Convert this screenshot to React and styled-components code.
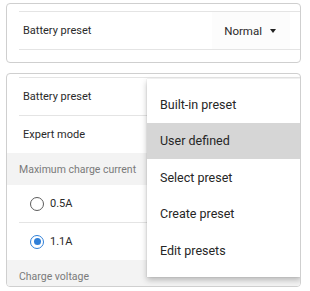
import styled, { createGlobalStyle } from 'styled-components'

const GlobalStyle = createGlobalStyle`
  body {
    margin: 0;
    background: #fff;
    font-family: Roboto, "Noto Sans", sans-serif;
    color: #222;
  }
`

const Page = styled.div`
  width: 310px;
  height: 291px;
  padding: 3px 0 0 6px;
  box-sizing: border-box;
  display: flex;
  flex-direction: column;
  gap: 10px;
  overflow: hidden;
`

const Card = styled.div`
  position: relative;
  width: 295px;
  height: ${props => props.height}px;
  box-sizing: border-box;
  border: 1px solid #cfcfcf;
  border-radius: 4px;
  background: #fff;
  overflow: ${props => (props.clip ? 'hidden' : 'visible')};
  display: flex;
  flex-direction: column;
`

const Spacer = styled.div`
  height: ${props => props.size}px;
  flex-shrink: 0;
`

const Divider = styled.div`
  height: 1px;
  margin-left: 12px;
  background: #e4e4e4;
  flex-shrink: 0;
`

const Row = styled.div`
  height: 37px;
  flex-shrink: 0;
  display: flex;
  align-items: center;
  justify-content: space-between;
  padding: 0 0 0 16px;
  font-size: 11px;
  color: #2a2a2a;
`

const Select = styled.div`
  display: flex;
  align-items: center;
  gap: 8px;
  height: 100%;
  padding: 0 14px 0 12px;
  margin-right: 10px;
  background: #fcfcfc;
  font-size: 11.5px;
  color: #2a2a2a;
`

const Caret = styled.span`
  width: 0;
  height: 0;
  border-left: 3.5px solid transparent;
  border-right: 3.5px solid transparent;
  border-top: 4px solid #222;
`

const Header = styled.div`
  height: 32px;
  flex-shrink: 0;
  display: flex;
  align-items: center;
  padding-left: 12px;
  background: #f3f3f3;
  font-size: 10.5px;
  color: #7a7a7a;
`

const RadioRow = styled(Row)`
  justify-content: flex-start;
  gap: 6px;
  padding-left: 23px;
`

const Radio = styled.span`
  width: 14px;
  height: 14px;
  box-sizing: border-box;
  border-radius: 50%;
  border: 1.5px solid ${props => (props.checked ? '#2f7fd8' : '#5c5c5c')};
  display: flex;
  align-items: center;
  justify-content: center;
  &::after {
    content: '';
    width: 7px;
    height: 7px;
    border-radius: 50%;
    background: ${props => (props.checked ? '#2f7fd8' : 'transparent')};
  }
`

const Menu = styled.div`
  position: absolute;
  top: 5px;
  left: 140px;
  width: 154px;
  padding: 7px 0 8px;
  background: #fff;
  box-shadow: 0 3px 6px rgba(0, 0, 0, 0.25), 0 0 1px rgba(0, 0, 0, 0.2);
  display: flex;
  flex-direction: column;
  z-index: 2;
`

const MenuItem = styled.div`
  height: 36.5px;
  display: flex;
  align-items: center;
  padding-left: 13px;
  font-size: 12.5px;
  color: #262626;
  background: ${props => (props.active ? '#d6d6d6' : 'transparent')};
`

const menuItems = ['Built-in preset', 'User defined', 'Select preset', 'Create preset', 'Edit presets']

const App = () => {
  return (
    <Page>
      <GlobalStyle />
      <Card height={60}>
        <Spacer size={7} />
        <Divider />
        <Row>
          <span>Battery preset</span>
          <Select>
            Normal
            <Caret />
          </Select>
        </Row>
        <Divider />
      </Card>
      <Card height={214} clip>
        <Spacer size={3} />
        <Divider />
        <Row>Battery preset</Row>
        <Divider />
        <Row>Expert mode</Row>
        <Header>Maximum charge current</Header>
        <RadioRow>
          <Radio />
          0.5A
        </RadioRow>
        <Divider />
        <RadioRow>
          <Radio checked />
          1.1A
        </RadioRow>
        <Header>Charge voltage</Header>
        <Menu>
          {menuItems.map((item, i) => (
            <MenuItem key={item} active={i === 1}>
              {item}
            </MenuItem>
          ))}
        </Menu>
      </Card>
    </Page>
  )
}

export default App
